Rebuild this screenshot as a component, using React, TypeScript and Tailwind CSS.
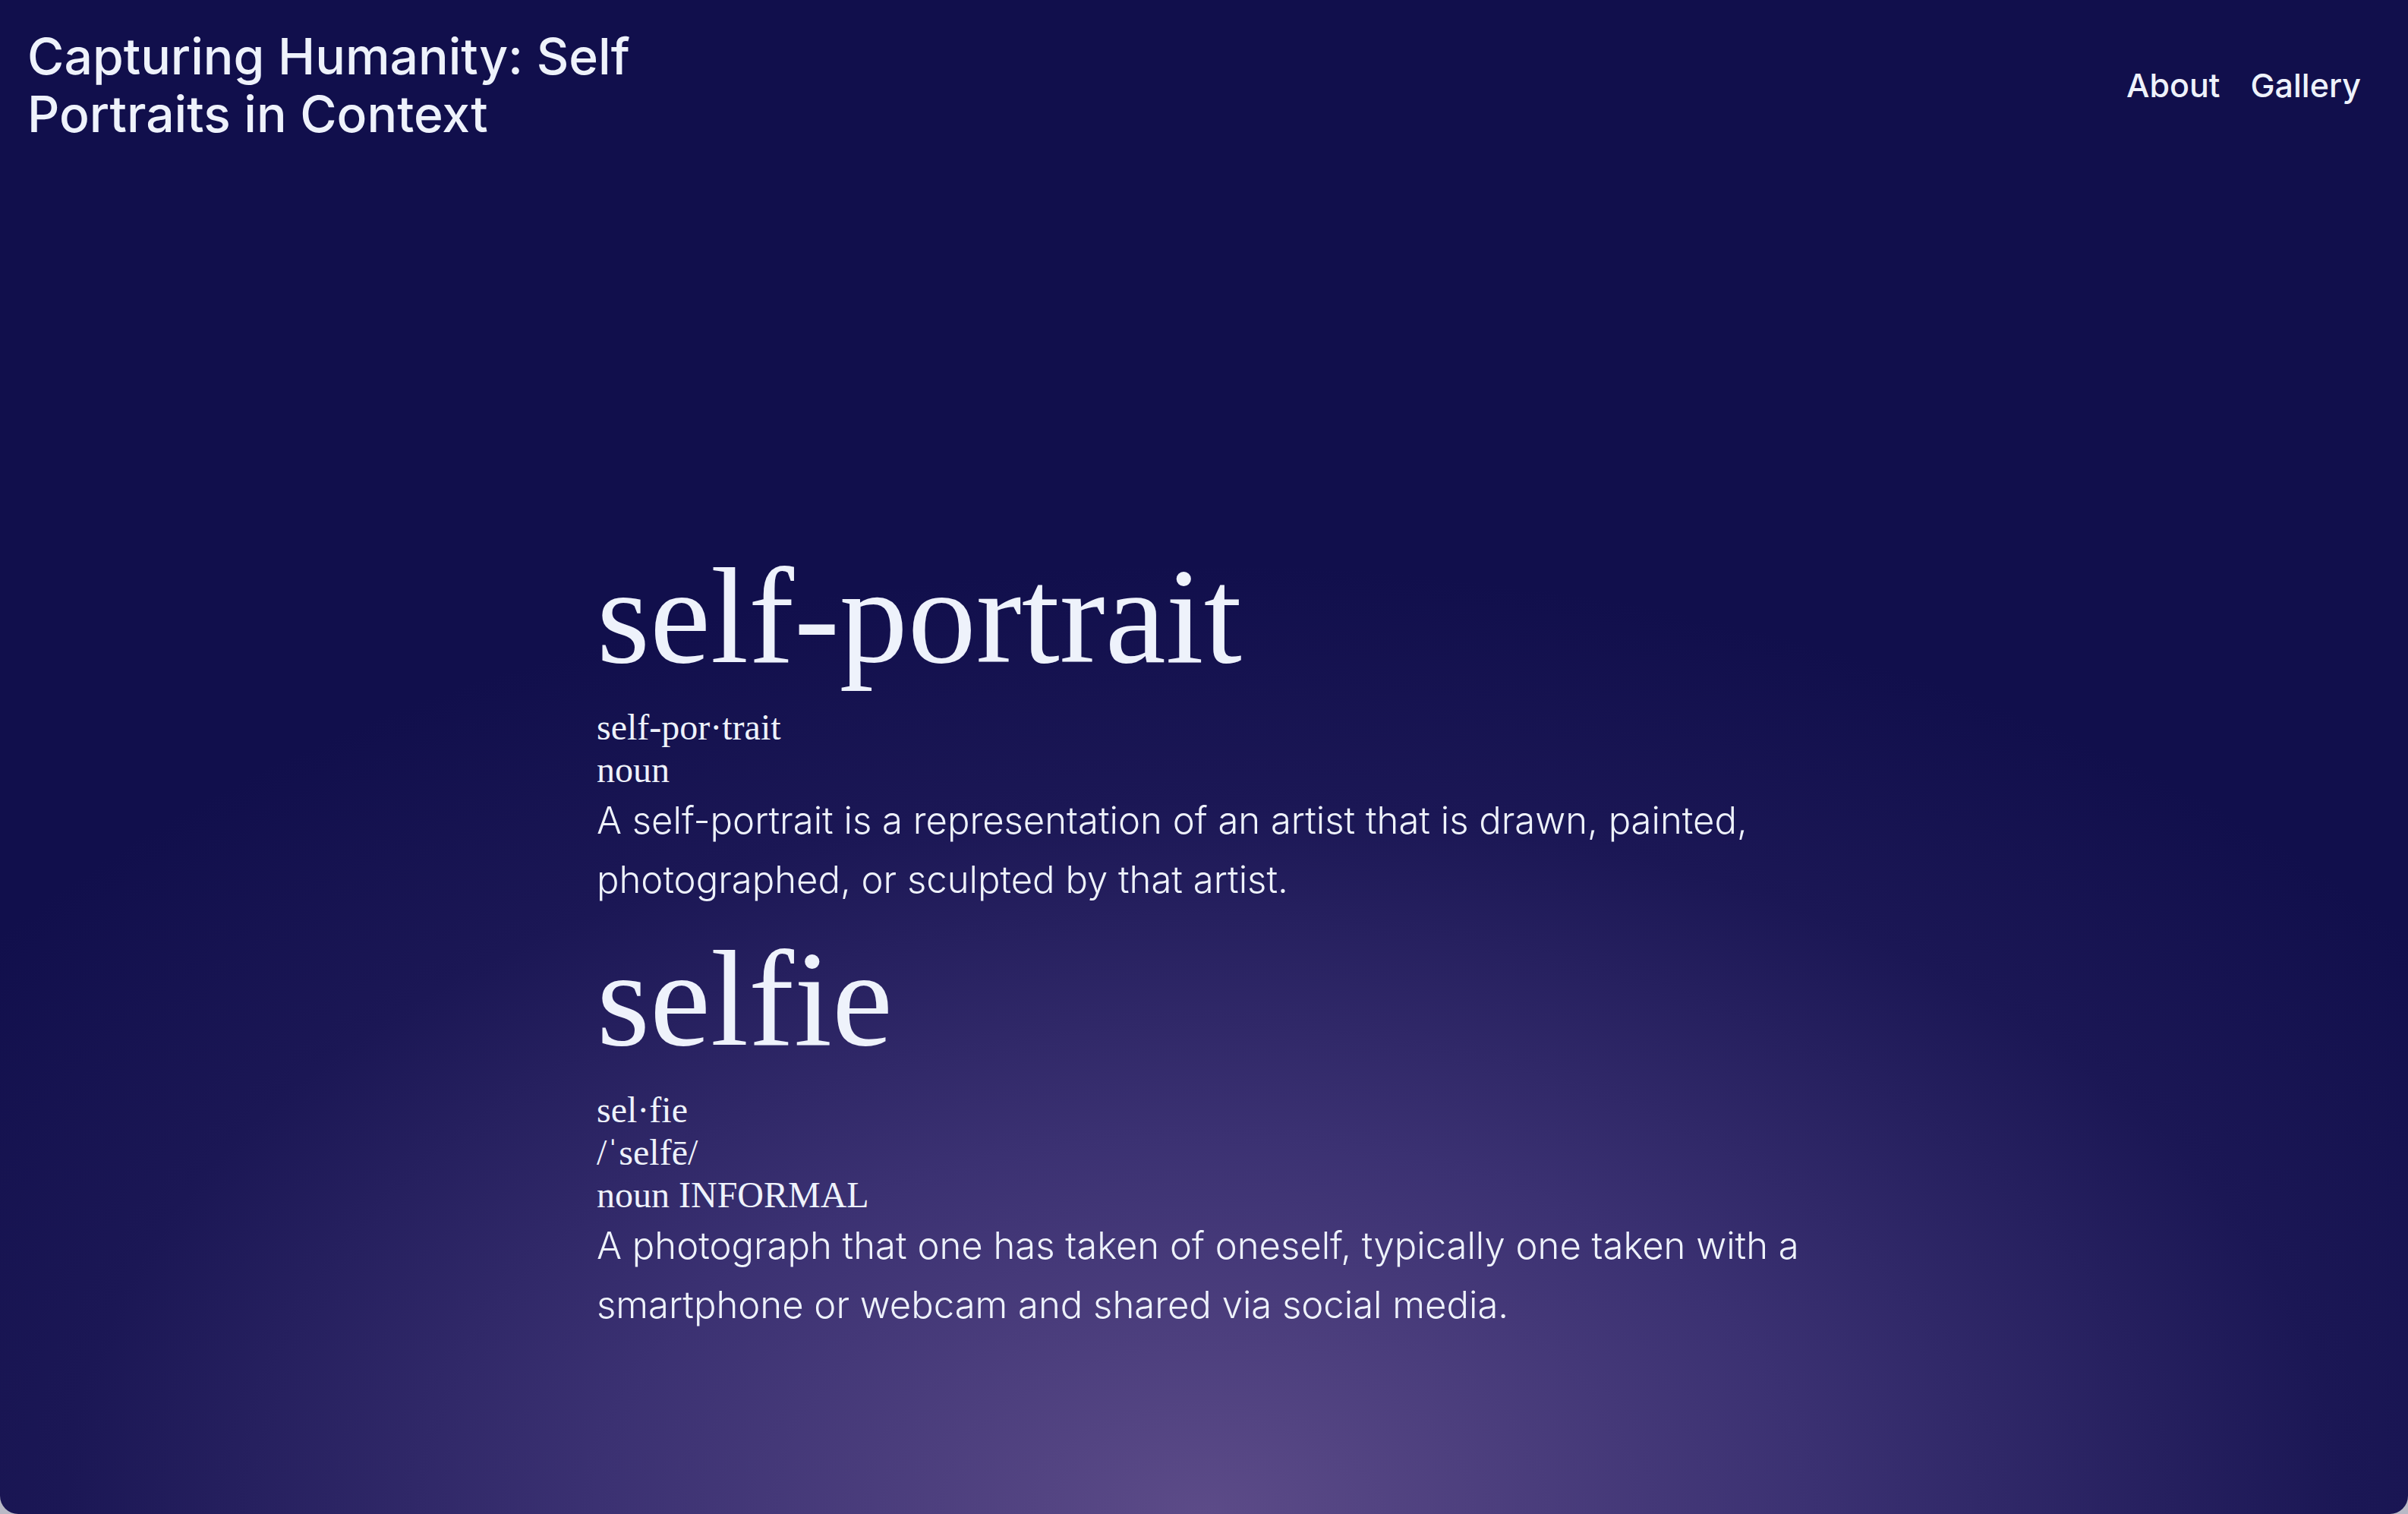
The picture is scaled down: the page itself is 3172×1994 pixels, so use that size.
const entries = [
  {
    word: 'self-portrait',
    lines: ['self-por·trait', 'noun'],
    definition:
      'A self-portrait is a representation of an artist that is drawn, painted, photographed, or sculpted by that artist.',
  },
  {
    word: 'selfie',
    lines: ['sel·fie', '/ˈselfē/', 'noun INFORMAL'],
    definition:
      'A photograph that one has taken of oneself, typically one taken with a smartphone or webcam and shared via social media.',
  },
]

const sans = "font-['Inter','Liberation_Sans',sans-serif]"

export default function App() {
  return (
    <div className="h-screen bg-[#b9b9c6]">
      <div className="flex h-full flex-col overflow-hidden rounded-b-[24px] bg-[radial-gradient(ellipse_2000px_1250px_at_50%_100%,#5c4b88_0%,#3b3172_40%,#1b1755_75%,#110f4c_100%)] text-[#eef2fb]">
        <header className="flex items-center justify-between pb-[28px] pl-[36px] pr-[62px] pt-[36px]">
          <h1
            className={`${sans} max-w-[880px] text-[66px] font-medium leading-[76px]`}
          >
            Capturing Humanity: Self Portraits in Context
          </h1>
          <nav className={`${sans} flex gap-[40px] text-[43px] font-medium`}>
            <a href="#">About</a>
            <a href="#">Gallery</a>
          </nav>
        </header>

        <main className="flex-1 pt-[478px]">
          <div className="mx-auto max-w-[1600px]">
            {entries.map((e) => (
              <section key={e.word}>
                <h2 className="font-['Liberation_Serif',serif] text-[180px] font-light leading-[236px]">
                  {e.word}
                </h2>
                {e.lines.map((l) => (
                  <div
                    key={l}
                    className="font-['Liberation_Serif',serif] text-[48px] leading-[56px]"
                  >
                    {l}
                  </div>
                ))}
                <p className={`${sans} text-[49px] font-light leading-[78px]`}>
                  {e.definition}
                </p>
              </section>
            ))}
          </div>
        </main>
      </div>
    </div>
  )
}
